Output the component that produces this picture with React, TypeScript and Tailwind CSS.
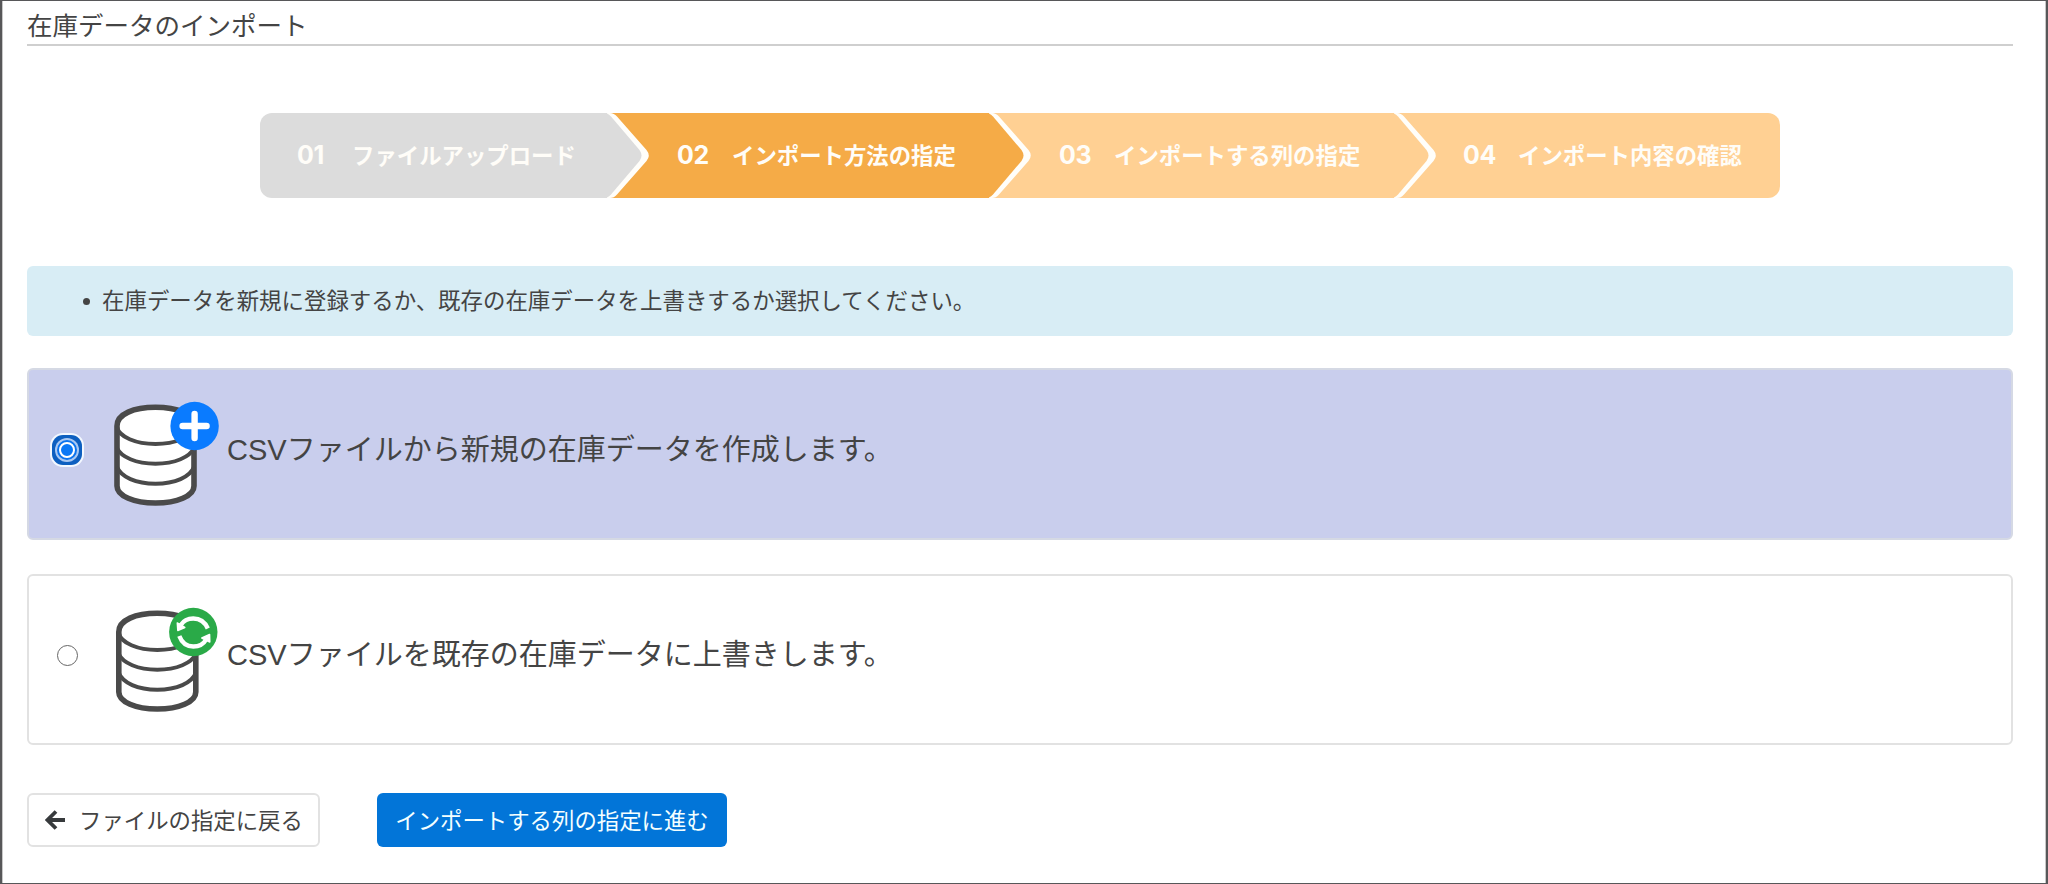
import { useState } from "react";
import clsx from "clsx";

const STEPS = [
  { no: "01", label: "ファイルアップロード" },
  { no: "02", label: "インポート方法の指定" },
  { no: "03", label: "インポートする列の指定" },
  { no: "04", label: "インポート内容の確認" },
];

const STEP_STYLES = [
  "w-[348px] pl-[37px] bg-[#dcdcdc]",
  "w-[382px] pl-[69px] bg-[#f5ab47]",
  "w-[405px] pl-[69px] bg-[#ffd093]",
  "flex-1 pl-[68px] bg-[#ffd093]",
];

const OPTIONS = [
  { value: "create", label: "CSVファイルから新規の在庫データを作成します。" },
  { value: "overwrite", label: "CSVファイルを既存の在庫データに上書きします。" },
];

function StepArrow({ fill }: { fill: string }) {
  return (
    <svg
      className="absolute left-full top-0 z-10 -ml-px h-[85px] w-[46px]"
      viewBox="0 0 46 85"
    >
      <path d="M0 0H3Q7 0 10 3.500L39.500 37Q44 42.500 39.500 48L10 81.500Q7 85 3 85H0Z" fill="#fffefa" />
      <path d="M-3 0Q1 0 4 3.500L32.500 37Q36.500 42.500 32.500 48L4 81.500Q1 85 -3 85Z" fill={fill} />
    </svg>
  );
}

function Stepper() {
  const fills = ["#dcdcdc", "#f5ab47", "#ffd093"];
  return (
    <ol className="ml-[233px] mt-[67px] flex h-[85px] w-[1520px] overflow-hidden rounded-xl">
      {STEPS.map((step, i) => (
        <li
          key={step.no}
          className={clsx(
            "relative flex shrink-0 items-center whitespace-nowrap pb-0.5 text-[22.400px] font-bold text-[#fffdf8]",
            STEP_STYLES[i]
          )}
        >
          <span className="w-[32px] pt-[3px] font-['Inter'] text-[25px] font-bold tracking-[-0.3px]">{step.no}</span>
          <span className="ml-[23px]">{step.label}</span>
          {i < 3 && <StepArrow fill={fills[i]} />}
        </li>
      ))}
    </ol>
  );
}

function DatabaseIcon({ overwrite }: { overwrite: boolean }) {
  return (
    <svg className="h-[110px] w-[108px]" viewBox="0 0 108 110" fill="none">
      <g transform={overwrite ? "translate(1.800 0)" : undefined} stroke="#4a4a4a">
        <path
          d="M5 26C5 14 22 7.300 43.500 7.300S82 14 82 26V86C82 96 65 103 43.500 103S5 96 5 86Z"
          fill="white"
          strokeWidth="5.600"
        />
        <path
          d="M5 27C7 37 24 44 43.500 44S80 37 82 27M5 48C9 57 24 63.700 43.500 63.700S78 57 82 48M5 67C9 77 24 83.700 43.500 83.700S78 77 82 67"
          strokeWidth="4"
        />
      </g>
      {overwrite ? (
        <g transform="translate(81.300 26)">
          <circle r="24.200" fill="#2aaa48" />
          <path d="M14.500 -3.500C11 -11.500 5.500 -13.500 0 -13.500C-5.500 -13.500 -10 -11 -12.500 -7" stroke="white" strokeWidth="4.400" />
          <path d="M-16 -9L-15.500 -1.500L-8.500 -4.500Z" fill="white" stroke="white" strokeWidth="1.500" strokeLinejoin="round" />
          <path d="M-14 4C-11 12 -5.500 14.500 0 14.500C5.500 14.500 10 12.500 12.500 8" stroke="white" strokeWidth="4.400" />
          <path d="M16.500 10L16.300 2.500L8.500 6Z" fill="white" stroke="white" strokeWidth="1.500" strokeLinejoin="round" />
        </g>
      ) : (
        <g transform="translate(82.600 26)">
          <circle r="24.200" fill="#0a7bff" />
          <path d="M0 -12V12M-12 0H12" stroke="white" strokeWidth="6.400" strokeLinecap="round" />
        </g>
      )}
    </svg>
  );
}

function Radio({ checked }: { checked: boolean }) {
  if (!checked) {
    return <span className="size-[21px] rounded-full border border-[#666] bg-white" />;
  }
  return (
    <span className="flex size-[34px] items-center justify-center rounded-[13px] bg-[#f3f8ff]">
      <span className="flex size-[30px] items-center justify-center rounded-[11px] bg-[#0d5fc0]">
        <span className="flex size-[24px] items-center justify-center rounded-full bg-[#a9c8f2]">
          <span className="flex size-[20px] items-center justify-center rounded-full bg-[#0b74ee]">
            <span className="size-[16px] rounded-full border-2 border-white bg-[#0a78f5]" />
          </span>
        </span>
      </span>
    </span>
  );
}

export default function App() {
  const [selected, setSelected] = useState("create");

  return (
    <div className="h-[884px] w-full overflow-hidden border-x-2 border-y border-[#575759] bg-white font-['Noto_Sans_CJK_JP',sans-serif] text-[#444]">
      <div className="h-full border-x border-[#c8c8c8] pl-6 pr-[32px]">
        <h1 className="h-[45px] border-b-2 border-[#cfcfcf] text-[25.500px] leading-[46px]">
          在庫データのインポート
        </h1>

        <Stepper />

        <ul className="mt-[68px] flex h-[70px] items-center rounded-md bg-[#d8edf5] pb-0.5 pl-[56px] text-[22.450px]">
          <li className="flex items-center">
            <span className="mr-[12px] mt-1 size-[7px] rounded-full bg-[#444]" />
            在庫データを新規に登録するか、既存の在庫データを上書きするか選択してください。
          </li>
        </ul>

        <div className="mt-8 flex flex-col gap-[34px]" role="radiogroup">
          {OPTIONS.map((option) => {
            const checked = option.value === selected;
            return (
              <div
                key={option.value}
                role="radio"
                aria-checked={checked}
                onClick={() => setSelected(option.value)}
                className={clsx(
                  "flex items-center rounded-md",
                  checked
                    ? "h-[172px] border-2 border-[#d5d9e4] bg-[#c9ceed]"
                    : "h-[171px] border-2 border-[#e2e2e2] bg-white"
                )}
              >
                <span className="flex w-[76px] shrink-0 justify-center pb-2">
                  <Radio checked={checked} />
                </span>
                <span className="ml-[7px] pt-0.5">
                  <DatabaseIcon overwrite={option.value === "overwrite"} />
                </span>
                <span className="ml-[7px] pb-[7px] font-['Liberation_Sans','Noto_Sans_CJK_JP',sans-serif] text-[29px]">
                  {option.label}
                </span>
              </div>
            );
          })}
        </div>

        <div className="mt-[48px] flex text-[22.400px]">
          <button className="flex h-[54px] w-[293px] items-center rounded-md border-2 border-[#e2e2e2] pl-[16px]">
            <svg className="mr-[14px] size-[20px]" viewBox="0 0 20 20" fill="none" stroke="#373a3c" strokeWidth="3.800">
              <path d="M11 1.500L2.500 10L11 18.500M3 10H20" />
            </svg>
            ファイルの指定に戻る
          </button>
          <button className="ml-[57px] h-[54px] w-[350px] rounded-md bg-[#0275d8] text-[#f4ffff]">
            インポートする列の指定に進む
          </button>
        </div>
      </div>
    </div>
  );
}
